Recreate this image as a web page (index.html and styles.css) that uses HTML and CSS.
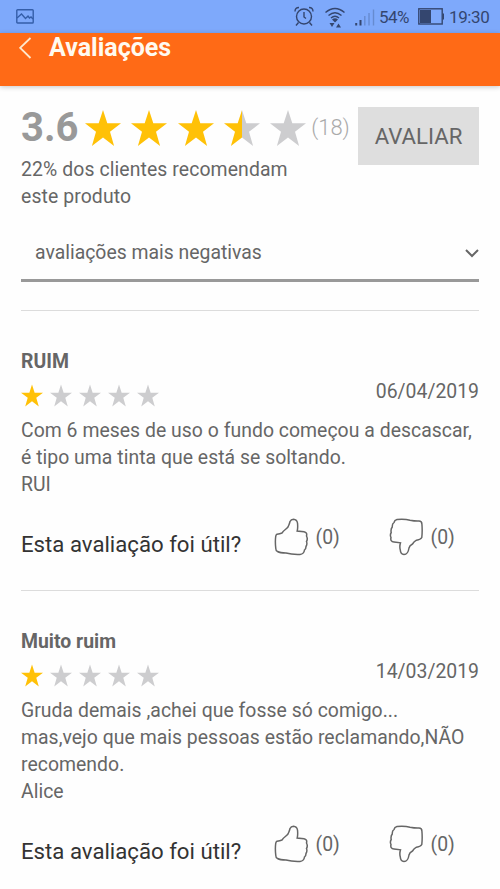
FILE: index.html
```html
<!DOCTYPE html>
<html lang="pt-BR">
<head>
<meta charset="utf-8">
<title>Avaliações</title>
<link rel="stylesheet" href="styles.css">
</head>
<body>
<svg class="defs" width="0" height="0" aria-hidden="true">
  <defs>
    <linearGradient id="half"><stop offset=".5" stop-color="#ffc107"/><stop offset=".5" stop-color="#cdcdcf"/></linearGradient>
    <symbol id="star" viewBox="0 0 36 36"><path d="M18 0l4.3 13.3H36L25 21.8 29.1 36 18 27.6 6.9 36 11 21.8 0 13.3h13.7z"/></symbol>
    <symbol id="up" viewBox="0 0 34 38"><path d="M3 16.2Q6 15.8 8 15C10 12 12.5 11 14 9Q15.500 6 16 3.500Q17 1.200 19.500 1.200Q23 1.500 23.500 5Q24 10 23.200 13L30 13.800Q33.500 14.500 32.500 18Q34 21 32.500 23.500Q33.500 26 32 28.500Q32 31 30.500 32Q30 36 26 36.400Q18 36.700 12 35Q6 35 3.500 33.500Q1.800 33 1.800 30.500Q1 24 1.700 18.500Q1.800 17 3 16.200z"/></symbol>
    <symbol id="down" viewBox="0 0 34 38"><path d="M8 1.500Q16 .9 21 2.200Q26 3.200 30 3Q32.800 3 32.900 6Q33.500 13 32.800 19.500Q31.500 21.800 27.500 22.200Q25 23.500 23.500 26Q20.500 27.500 20 30Q19 36.500 15 36.500Q11.500 36.200 11.300 32Q10.300 28.500 11.500 24.800L5 24Q1 23.500 2 19.500Q.7 17 2.200 14.500Q1.500 11 3.300 9Q3 6 5 4.500Q5.500 2 8 1.500z"/></symbol>
  </defs>
</svg>
<div class="status">
  <svg class="picture" width="18" height="15" viewBox="0 0 18 15"><rect x=".8" y=".8" width="16.4" height="13.2" rx=".8"/><path d="M1 9l4.500-4 4 4.500 2.500-2.500 1.500 2 1.500-1 2 2"/></svg>
  <svg class="alarm" width="20" height="21" viewBox="0 0 20 21"><circle cx="10" cy="10.5" r="7.5"/><path d="M10 6v5l2 1.500M1 5.500Q1 1.500 5 1.500M15 1.500q4 0 4 4M4.500 16.500L2 19.500M15.500 16.500l2.500 3"/></svg>
  <svg class="wifi" width="20" height="21" viewBox="0 0 20 21"><path d="M.5 5.500Q10-2.500 19.500 5.500M3.500 8.500q6.500-5.500 13 0M6 11q4-3.500 8 0"/><path class="solid" d="M7 12.500q3-2.500 6 0L10 15.500zM4.500 16h5L7 20zM11 20.500h5l-2.500-4z"/></svg>
  <svg class="signal" width="20" height="17" viewBox="0 0 20 17"><path class="strong" d="M1.200 14v2.500M5.500 11v5.500"/><path class="faint" d="M9.800 7v9.500M14 4v12.500M18.500.5v16"/></svg>
  <span class="percent">54%</span>
  <svg class="battery" width="27" height="17" viewBox="0 0 27 17"><rect x=".8" y=".8" width="23.4" height="15.2"/><path class="solid" d="M2 2h11v13H2zM24.500 5.500H26v6h-1.500z"/></svg>
  <span class="clock">19:30</span>
</div>
<header class="header">
  <svg width="13" height="22" viewBox="0 0 13 22"><path d="M11.500 1L1.200 10.800 11.500 21"/></svg>
  <h1>Avaliações</h1>
</header>
<main>
  <section class="summary">
    <div class="rating">
      <div class="score-row">
        <strong class="score">3.6</strong>
        <div class="stars large">
          <svg class="on"><use href="#star"/></svg><svg class="on"><use href="#star"/></svg><svg class="on"><use href="#star"/></svg><svg class="half"><use href="#star"/></svg><svg><use href="#star"/></svg>
        </div>
        <span class="total">(18)</span>
      </div>
      <p class="recommend">22% dos clientes recomendam<br>este produto</p>
    </div>
    <button class="rate">AVALIAR</button>
  </section>
  <div class="sort"><span>avaliações mais negativas</span><svg width="14" height="9" viewBox="0 0 14 9"><path d="M1 1l6 6 6-6"/></svg></div>
  <article class="review">
    <h2>RUIM</h2>
    <div class="meta">
      <div class="stars small"><svg class="on"><use href="#star"/></svg><svg><use href="#star"/></svg><svg><use href="#star"/></svg><svg><use href="#star"/></svg><svg><use href="#star"/></svg></div>
      <time>06/04/2019</time>
    </div>
    <p>Com 6 meses de uso o fundo começou a descascar,<br>é tipo uma tinta que está se soltando.<br>RUI</p>
    <div class="helpful"><span class="question">Esta avaliação foi útil?</span><svg class="thumb"><use href="#up"/></svg><span class="count">(0)</span><svg class="thumb down"><use href="#down"/></svg><span class="count">(0)</span></div>
  </article>
  <article class="review">
    <h2>Muito ruim</h2>
    <div class="meta">
      <div class="stars small"><svg class="on"><use href="#star"/></svg><svg><use href="#star"/></svg><svg><use href="#star"/></svg><svg><use href="#star"/></svg><svg><use href="#star"/></svg></div>
      <time>14/03/2019</time>
    </div>
    <p>Gruda demais ,achei que fosse só comigo...<br>mas,vejo que mais pessoas estão reclamando,NÃO<br>recomendo.<br>Alice</p>
    <div class="helpful"><span class="question">Esta avaliação foi útil?</span><svg class="thumb"><use href="#up"/></svg><span class="count">(0)</span><svg class="thumb down"><use href="#down"/></svg><span class="count">(0)</span></div>
  </article>
</main>
</body>
</html>
```
FILE: styles.css
```css
* { box-sizing: border-box; }
body {
  margin: 0;
  height: 889px;
  overflow: hidden;
  background: #fefefe;
  color: #666;
  font: 19.4px/27px Roboto, sans-serif;
}
h1, h2, p { margin: 0; }
svg { display: block; flex: none; fill: none; }
.defs { position: absolute; }
.status {
  height: 33px;
  display: flex;
  align-items: center;
  padding: 0 11px 0 16px;
  background: #7ea9fb;
  color: #34466f;
  font-size: 17px;
}
.status svg { stroke: #34466f; stroke-width: 1.4; }
.status .solid { fill: #34466f; stroke: none; }
.status .strong { stroke-width: 2; }
.status .faint { stroke: #668bd0; }
.status .picture { stroke: #345ea9; }
.alarm { margin-left: 260px; }
.wifi { margin: 2px 0 0 11px; }
.signal { margin: 1px 0 0 10px; }
.percent { margin: 1px 0 0 4px; width: 30px; letter-spacing: -.5px; white-space: nowrap; }
.battery { margin-left: 9px; }
.clock { margin: 1px 0 0 4px; letter-spacing: -.4px; }
.header {
  height: 53px;
  display: flex;
  align-items: flex-start;
  gap: 17px;
  padding: 4px 0 0 19px;
  background: #ff6a16;
  box-shadow: 0 1px 5px rgba(0, 0, 0, .22);
  color: #fffaf0;
}
.header svg { stroke: #ffe8cc; stroke-width: 1.8; }
.header h1 { font-size: 25px; line-height: 22px; font-weight: 700; }
main { padding: 21px 21px 0; }
.summary { display: flex; justify-content: space-between; height: 122px; }
.score-row { display: flex; height: 49px; }
.score { width: 64px; color: #999; font-size: 40px; line-height: 41px; }
.stars { display: flex; }
.stars svg { fill: #cdcdcf; }
.stars .on { fill: #ffc107; }
.stars .half { fill: url(#half); }
.large { gap: 10.3px; padding-top: 3px; }
.large svg { width: 36px; height: 36px; }
.total { margin-left: 5px; color: #aaa; font-size: 22px; font-weight: 300; line-height: 42px; }
.recommend { letter-spacing: .1px; }
.rate {
  width: 121px;
  height: 58px;
  padding: 0;
  border: 0;
  background: #dedede;
  color: #666;
  font: 22.2px Roboto, sans-serif;
}
.sort {
  display: flex;
  justify-content: space-between;
  align-items: center;
  height: 53px;
  padding: 0 0 4px 14px;
  border-bottom: 3px solid #999;
  margin-bottom: 28px;
}
.sort svg { stroke: #666; stroke-width: 2; margin-top: 2px; }
.review { border-top: 1px solid #dcdcdc; padding-top: 37px; }
.review h2 { font-size: 19.4px; line-height: 27px; font-weight: 700; }
.meta { display: flex; justify-content: space-between; height: 42px; }
.small { gap: 7px; padding-top: 9px; }
.small svg { width: 22px; height: 23px; }
.meta time { line-height: 34px; }
.review p { white-space: nowrap; letter-spacing: .03px; }
.helpful { display: flex; height: 92px; padding-top: 19px; }
.question { width: 253px; color: #333; font-size: 22.2px; line-height: 55px; white-space: nowrap; }
.thumb { width: 34px; height: 38px; margin-top: 1px; stroke: #666; stroke-width: 1.5; }
.down { margin-left: 50px; }
.count { margin-left: 7.5px; width: 23.5px; font-size: 19.4px; line-height: 42px; white-space: nowrap; }
```
